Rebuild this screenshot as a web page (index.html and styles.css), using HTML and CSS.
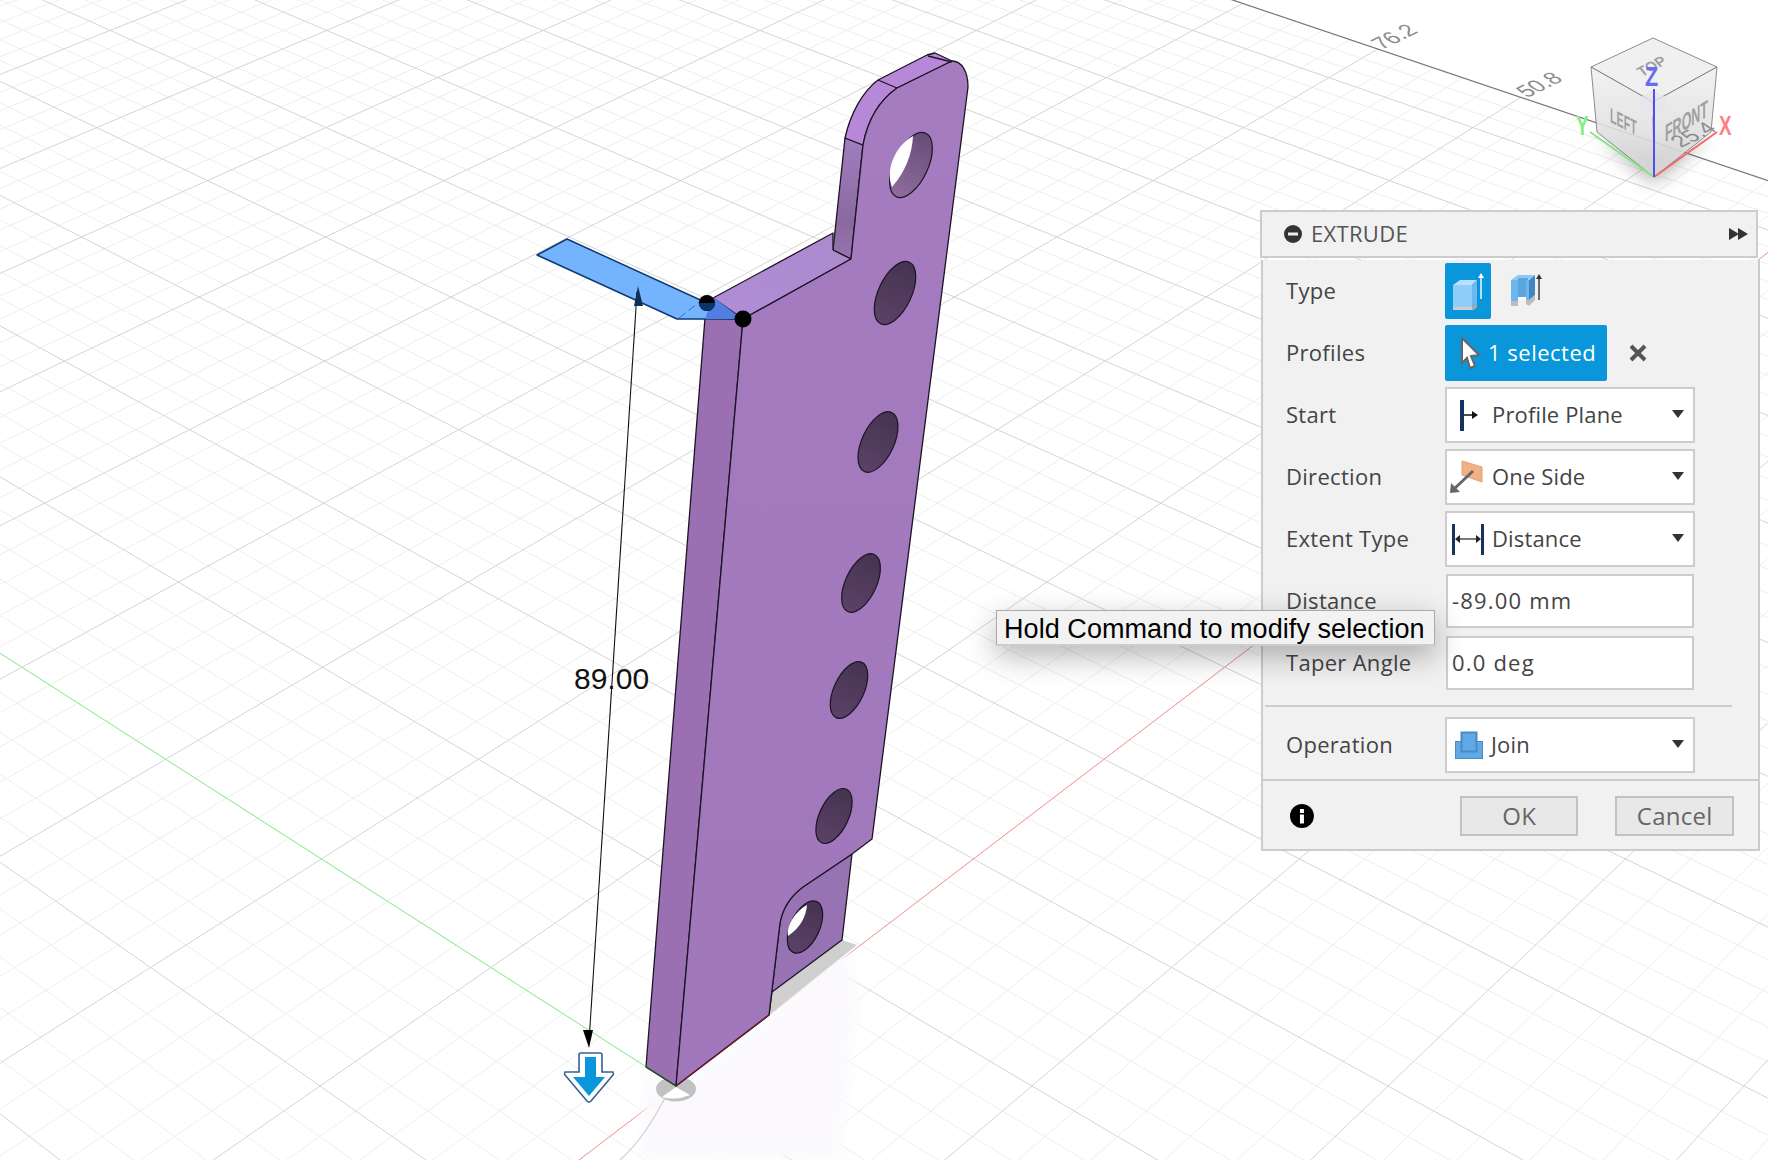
FILE: index.html
```html
<!DOCTYPE html>
<html lang="en">
<head>
    <meta charset="UTF-8">
    <title>Extrude</title>
    <link rel="stylesheet" href="styles.css">
</head>
<body>

<div class="viewport">
    <svg class="scene" width="1768" height="1160" viewBox="0 0 1768 1160">
        <defs>
            <filter id="blur6" x="-30%" y="-30%" width="160%" height="160%"><feGaussianBlur stdDeviation="6"/></filter>
            <filter id="blur10" x="-50%" y="-50%" width="200%" height="200%"><feGaussianBlur stdDeviation="10"/></filter>
            <linearGradient id="frontFace" x1="0" y1="0" x2="0" y2="1">
                <stop offset="0" stop-color="#a57cc0"/>
                <stop offset="1" stop-color="#a077ba"/>
            </linearGradient>
            <linearGradient id="innerFace" x1="0" y1="0" x2="0" y2="1">
                <stop offset="0" stop-color="#a07ec0"/>
                <stop offset="0.7" stop-color="#8a699f"/>
                <stop offset="1" stop-color="#9874b2"/>
            </linearGradient>
            <linearGradient id="ledgeFace" x1="0" y1="1" x2="1" y2="0">
                <stop offset="0" stop-color="#b08dd6"/>
                <stop offset="1" stop-color="#ab8acd"/>
            </linearGradient>
            <linearGradient id="holeFill" x1="0" y1="0" x2="0" y2="1">
                <stop offset="0" stop-color="#453350"/>
                <stop offset="1" stop-color="#5a4267"/>
            </linearGradient>
            <linearGradient id="rimFill" x1="0" y1="0" x2="0" y2="1">
                <stop offset="0" stop-color="#664d76"/>
                <stop offset="1" stop-color="#906c9c"/>
            </linearGradient>
            <linearGradient id="cubeSide" x1="0" y1="0" x2="0" y2="1">
                <stop offset="0" stop-color="#f0f0f0"/>
                <stop offset="1" stop-color="#d6d6d6"/>
            </linearGradient>
        </defs>

        <!-- ground grid, filled in by grid.js -->
        <g id="grid"></g>

        <!-- ground shadows -->
        <polygon class="reflection" points="646,1067 676,1086 769,1015 843,940 858,990 840,1160 640,1160" filter="url(#blur6)"/>
        <polygon class="ground-shadow" points="769,1015 772,992 842,940 857,945"/>
        <ellipse class="origin-ring" cx="676" cy="1089" rx="20" ry="12.5"/>
        <path class="origin-hole" d="M676 1087 L662 1097 Q676 1101 690 1095 Z"/>
        <path class="origin-curve" d="M665 1098 C652 1122 640 1142 620 1160"/>

        <!-- the part -->
        <g class="part">
            <path class="left-face" d="M705 318 L743 319 L676 1086 L646 1067 Z"/>
            <path class="low-face" d="M852 854 L842 940 L772 992 L769 1015 L780 923 C782 912 788 898 803 887 Z"/>
            <path class="inner-face" d="M845 138 L863 145 L851 259 L833 250 Z"/>
            <path class="ledge-face" d="M713 298 L833 233 L833 250 L851 259 L743 319 Z"/>
            <path class="top-face" d="M845 138 C850 115 862 92 878 80 L927 55 L935 53 L952 61 L897 88 C880 100 868 118 863 145 Z"/>
            <path class="front-face" d="M743 319 L851 259 L863 145 C868 118 880 100 897 88 L952 61 C962 61 968 72 968 87 L872 839 L852 854 L803 887 C788 898 782 912 780 923 L769 1015 L676 1086 Z"/>
            <path class="part-edge" d="M878 80 L897 88 M928 56 L952 62"/>
            <path class="red-edge" d="M676 1086 L769 1015"/>
            <path class="green-edge" d="M646 1067 L676 1086"/>
        </g>

        <!-- holes -->
        <g class="holes">
            <ellipse class="hole-rim" cx="911" cy="165" rx="17" ry="35" transform="rotate(25 911 165)"/>
            <path class="hole-through" d="M892 187 C885 170 895 146 913 136 C912 155 905 172 892 187 Z"/>
            <ellipse class="hole" cx="895" cy="293" rx="16.5" ry="34" transform="rotate(25 895 293)"/>
            <ellipse class="hole" cx="878" cy="442" rx="16" ry="32.5" transform="rotate(25 878 442)"/>
            <ellipse class="hole" cx="861" cy="583" rx="15.5" ry="31.5" transform="rotate(25 861 583)"/>
            <ellipse class="hole" cx="849" cy="690" rx="15" ry="30.5" transform="rotate(25 849 690)"/>
            <ellipse class="hole" cx="834" cy="816" rx="14.5" ry="29.5" transform="rotate(25 834 816)"/>
            <ellipse class="hole" cx="805" cy="927" rx="14.5" ry="28" transform="rotate(25 805 927)"/>
            <path class="hole-through" d="M788 936 C786 925 796 911 807 905 C806 917 800 928 788 936 Z"/>
        </g>

        <!-- selected profile -->
        <polygon class="flap" points="537,255 567,239 742,319 677,319"/>
        <polygon class="flap-overlap" points="713,297 742,319 705,319"/>
        <path class="flap-dash" d="M679 318 L702 300"/>
        <circle class="snap-dot" cx="707" cy="303" r="8"/>
        <path class="snap-dot-cover" d="M699 303 L715 303 A8 8 0 0 1 699 303 Z"/>
        <circle class="snap-dot" cx="743" cy="319" r="8.5"/>

        <!-- dimension -->
        <path class="dim-line" d="M637 292 L589 1042"/>
        <polygon class="dim-head-top" points="638,286 643,306 634,306"/>
        <polygon class="dim-head" points="589,1048 583,1030 593,1030"/>
        <text class="dim-text" x="574" y="689">89.00</text>

        <!-- drag arrow -->
        <path class="drag-outer" d="M581 1053 L600 1053 Q602 1053 602 1055 L602 1072 L613 1072 Q614 1074 613 1075 L591 1101 Q589 1103 587 1101 L565 1075 Q564 1074 565 1072 L579 1072 L579 1055 Q579 1053 581 1053 Z"/>
        <path class="drag-fill" d="M585 1057 L596 1057 L596 1077 L605 1077 L589 1096 L573 1077 L585 1077 Z"/>

        <!-- sheet labels -->
        <text class="sheet-label" transform="matrix(0.95 -0.46 0.93 0.66 1382 50)">76.2</text>
        <text class="sheet-label" transform="matrix(0.95 -0.46 0.93 0.66 1527 98)">50.8</text>

        <!-- view cube -->
        <polygon class="cube-shadow" points="1600,135 1654,182 1708,135 1654,150" filter="url(#blur10)"/>
        <g class="cube">
            <polygon class="cube-top" points="1653,38 1717,67 1653,102 1591,67"/>
            <polygon class="cube-side" points="1591,67 1653,102 1654,177 1597,132"/>
            <polygon class="cube-side" points="1653,102 1717,67 1711,132 1654,177"/>
        </g>
        <polygon class="cube-home" points="1653,90 1665,97 1665,110 1653,117 1641,110 1641,97"/>
        <text class="cube-label" transform="matrix(0.79 -0.42 0.58 0.72 1642 77)">TOP</text>
        <text class="cube-label" transform="matrix(0.67 0.34 0 1.3 1610 122)">LEFT</text>
        <text class="cube-label" transform="matrix(0.78 -0.47 0 1.5 1665 142)">FRONT</text>
        <text class="sheet-label" transform="matrix(0.95 -0.46 0.93 0.66 1681 148)">25.4</text>
        <path class="axis-y" d="M1590 132 L1654 177"/>
        <path class="axis-x" d="M1717 132 L1654 177"/>
        <path class="axis-z" d="M1654 89 L1654 177"/>
        <text class="axis-name name-z" transform="matrix(0.8 0 0 1 1645 86)">Z</text>
        <text class="axis-name name-y" transform="matrix(0.7 0 0 1 1576 135)">Y</text>
        <text class="axis-name name-x" transform="matrix(0.7 0 0 1 1719 135)">X</text>
    </svg>

    <section class="panel">
        <header class="panel-head">
            <svg class="head-icon" width="18" height="18" viewBox="0 0 18 18">
                <circle cx="9" cy="9" r="9" fill="#333"/>
                <rect x="4" y="7.5" width="10" height="3" fill="#eee"/>
            </svg>
            <span class="panel-title">EXTRUDE</span>
            <svg class="head-more" width="20" height="12" viewBox="0 0 20 12">
                <path d="M0 0 L10 6 L0 12 Z M9 0 L19 6 L9 12 Z" fill="#333"/>
            </svg>
        </header>

        <div class="panel-body">
            <div class="row">
                <div class="label">Type</div>
                <div class="type-btn active">
                    <svg width="34" height="36" viewBox="0 0 34 36">
                        <polygon points="8,11 15,6 32,6 27,11" fill="#b8e2ff"/>
                        <rect x="8" y="11" width="19" height="22" fill="#8fcdfb"/>
                        <polygon points="27,11 32,6 32,29 27,33" fill="#6bb8f2"/>
                        <rect x="8" y="33" width="19" height="5" fill="#cfcfcf"/>
                        <polygon points="27,33 32,29 32,33 27,38" fill="#aaa"/>
                    </svg>
                    <svg class="type-arrow" width="6" height="26" viewBox="0 0 6 26">
                        <path d="M3 26 L3 4" stroke="#fff" stroke-width="1.4"/>
                        <path d="M3 0 L6 5 L0 5 Z" fill="#fff"/>
                    </svg>
                </div>
                <div class="type-btn">
                    <svg width="32" height="36" viewBox="0 0 32 36">
                        <polygon points="0,6 7,1 24,1 17,6" fill="#8fc8f2"/>
                        <rect x="0" y="6" width="7" height="21" fill="#6fb6ec"/>
                        <rect x="7" y="4" width="10" height="19" fill="#5aa5dd"/>
                        <rect x="7" y="23" width="10" height="3" fill="#fff"/>
                        <rect x="15" y="6" width="3" height="20" fill="#6fb6ec"/>
                        <polygon points="18,6 24,1 24,21 18,26" fill="#3f88c5"/>
                        <polygon points="0,27 7,27 7,32 0,32" fill="#bdbdbd"/>
                        <polygon points="15,26 18,26 24,21 24,26 18,32 15,30" fill="#bdbdbd"/>
                        <path d="M28 26 L28 4" stroke="#333" stroke-width="1.4"/>
                        <path d="M28 0 L31 5 L25 5 Z" fill="#333"/>
                    </svg>
                </div>
            </div>

            <div class="row">
                <div class="label">Profiles</div>
                <div class="select-btn">
                    <svg width="22" height="32" viewBox="0 0 22 32">
                        <path d="M3 1 L20 18 L12 19 L16 29 L11 31 L8 21 L3 26 Z" fill="#fff" stroke="#666" stroke-width="2"/>
                    </svg>
                    <span>1 selected</span>
                </div>
                <svg class="clear-x" width="18" height="18" viewBox="0 0 18 18">
                    <path d="M2 2 L16 16 M16 2 L2 16" stroke="#555" stroke-width="4"/>
                </svg>
            </div>

            <div class="row">
                <div class="label">Start</div>
                <div class="dropdown">
                    <svg class="dd-icon" width="40" height="34" viewBox="0 0 40 34">
                        <rect x="13" y="2" width="4" height="31" fill="#14315f"/>
                        <path d="M17 17 L28 17" stroke="#111" stroke-width="1.5"/>
                        <path d="M25 13 L31 17 L25 21 Z" fill="#111"/>
                    </svg>
                    <span>Profile Plane</span>
                    <i class="caret"></i>
                </div>
            </div>

            <div class="row">
                <div class="label">Direction</div>
                <div class="dropdown">
                    <svg class="dd-icon" width="40" height="34" viewBox="0 0 40 34">
                        <polygon points="15,1 35,7 35,22 15,15" fill="#f2b184" stroke="#e0a07a"/>
                        <path d="M26 11 L7 29" stroke="#666" stroke-width="3"/>
                        <path d="M3 33 L4 23 L13 32 Z" fill="#666"/>
                    </svg>
                    <span>One Side</span>
                    <i class="caret"></i>
                </div>
            </div>

            <div class="row">
                <div class="label">Extent Type</div>
                <div class="dropdown">
                    <svg class="dd-icon" width="40" height="34" viewBox="0 0 40 34">
                        <rect x="5" y="2" width="3" height="31" fill="#14315f"/>
                        <rect x="34" y="2" width="3" height="31" fill="#14315f"/>
                        <path d="M11 17 L31 17" stroke="#222" stroke-width="1.2"/>
                        <path d="M8 17 L13 13 L13 21 Z M34 17 L29 13 L29 21 Z" fill="#222"/>
                    </svg>
                    <span>Distance</span>
                    <i class="caret"></i>
                </div>
            </div>

            <div class="row">
                <div class="label">Distance</div>
                <div class="field">-89.00 mm</div>
            </div>

            <div class="row">
                <div class="label">Taper Angle</div>
                <div class="field">0.0 deg</div>
            </div>

            <hr class="divider">

            <div class="row">
                <div class="label">Operation</div>
                <div class="dropdown">
                    <svg class="dd-icon join" width="38" height="34" viewBox="0 0 38 34">
                        <rect x="7.5" y="13.5" width="27" height="17" fill="#5fa9e6" stroke="#4a8cc0"/>
                        <rect x="13.5" y="4.5" width="15" height="19" fill="#5fa9e6" stroke="#4a8cc0" stroke-width="2"/>
                    </svg>
                    <span>Join</span>
                    <i class="caret"></i>
                </div>
            </div>
        </div>

        <footer class="panel-foot">
            <svg class="info" width="24" height="24" viewBox="0 0 24 24">
                <circle cx="12" cy="12" r="12" fill="#000"/>
                <rect x="10" y="5" width="4" height="4" fill="#fff"/>
                <rect x="10" y="10.5" width="4" height="9" fill="#fff"/>
            </svg>
            <div class="foot-btn ok">OK</div>
            <div class="foot-btn">Cancel</div>
        </footer>
    </section>

    <div class="tooltip">Hold Command to modify selection</div>
</div>

<script src="grid.js"></script>
</body>
</html>
```

FILE: styles.css
```css
body {
    margin: 0;
    background: #fff;
    font-family: "Open Sans", "Liberation Sans", sans-serif;
    color: #444;
}

.viewport {
    position: relative;
    width: 1768px;
    height: 1160px;
    overflow: hidden;
}

.scene {
    display: block;
}

/* grid */
.grid-minor { stroke: #eeeeee; stroke-width: 1; }
.grid-major { stroke: #d4d4d4; stroke-width: 1; }
.grid-edge { stroke: #777; stroke-width: 1.2; }
.grid-red { stroke: #ff9898; stroke-width: 1; }
.grid-green { stroke: #8ef58e; stroke-width: 1; }

/* ground */
.reflection { fill: #fbf9fd; }
.ground-shadow { fill: #cfcfcf; }
.origin-ring { fill: #c2c2c2; }
.origin-hole { fill: #fff; }
.origin-curve { fill: none; stroke: #cfcfcf; stroke-width: 1.2; }

/* part */
.part path { stroke: #1d1423; stroke-width: 1.3; stroke-linejoin: round; }
.front-face { fill: url(#frontFace); }
.left-face { fill: #9a70b2; }
.low-face { fill: #9873b3; }
.inner-face { fill: url(#innerFace); }
.ledge-face { fill: url(#ledgeFace); }
.top-face { fill: #b888d8; }
.part .part-edge { fill: none; }
.part .red-edge { stroke: #6d1a2c; }
.part .green-edge { stroke: #1c5a24; }

.hole { fill: url(#holeFill); stroke: #1d1423; stroke-width: 1.2; }
.hole-rim { fill: url(#rimFill); stroke: #1d1423; stroke-width: 1.2; }
.hole-through { fill: #fff; }

/* profile */
.flap { fill: #74b4ff; stroke: #0f3a70; stroke-width: 1.5; stroke-linejoin: round; }
.flap-overlap { fill: #527de2; }
.flap-dash { stroke: #3a6ab0; stroke-width: 1; stroke-dasharray: 8 4; }
.snap-dot { fill: #000; }
.snap-dot-cover { fill: #0c3468; }

/* dimension */
.dim-line { stroke: #111; stroke-width: 1.1; }
.dim-head { fill: #000; }
.dim-head-top { fill: #0d2f58; }
.dim-text {
    font-family: "Liberation Sans", Arial, sans-serif;
    font-size: 30px;
    fill: #111;
}

.drag-outer { fill: #fff; stroke: #34618f; stroke-width: 1.6; }
.drag-fill { fill: #0a96da; }

/* labels */
.sheet-label {
    font-family: "Liberation Sans", Arial, sans-serif;
    font-size: 20px;
    fill: #8c8c8c;
}

/* cube */
.cube-shadow { fill: #000; opacity: 0.35; }
.cube polygon { stroke: #7c7c7c; stroke-width: 1; opacity: 0.88; }
.cube-top { fill: #efefef; }
.cube-side { fill: url(#cubeSide); }
.cube-home { fill: #e5e5ec; opacity: 0.8; }
.cube-label {
    font-family: "Liberation Sans", Arial, sans-serif;
    font-size: 16px;
    font-weight: bold;
    fill: #a0a0a0;
}
.axis-x { stroke: #f26a6a; stroke-width: 2; }
.axis-y { stroke: #84e884; stroke-width: 2; }
.axis-z { stroke: #5050ee; stroke-width: 2; }
.axis-name {
    font-family: "Liberation Sans", Arial, sans-serif;
    font-size: 27px;
    font-weight: bold;
}
.name-x { fill: #ff8080; }
.name-y { fill: #84f084; }
.name-z { fill: #6a6af2; }

/* extrude panel */
.panel {
    position: absolute;
    left: 1260px;
    top: 210px;
    width: 500px;
    font-size: 22px;
    letter-spacing: 0.3px;
}

.panel-head {
    display: flex;
    align-items: center;
    box-sizing: border-box;
    height: 48px;
    margin-right: 2px;
    padding: 0 7px 0 22px;
    background: #f1f1f1;
    border: 2px solid #ccc;
}

.head-icon {
    margin-right: 9px;
}

.panel-title {
    flex: 1;
    color: #555;
    margin-top: -2px;
}

.panel-body {
    display: flex;
    flex-direction: column;
    gap: 6px;
    margin: 2px 0 0 1px;
    padding: 3px 0 6px;
    background: #f1f1f1;
    border: solid #ccc;
    border-width: 0 2px;
}

.row {
    display: flex;
    align-items: center;
    height: 56px;
}

.label {
    width: 159px;
    margin: -2px 0 0 23px;
    white-space: nowrap;
}

.type-btn {
    display: flex;
    align-items: center;
    box-sizing: border-box;
    width: 46px;
    height: 56px;
    margin-right: 20px;
    padding-top: 2px;
    border-radius: 2px;
}

.type-btn.active {
    background: #0996da;
}

.type-btn svg {
    flex: none;
}

.type-btn.active .type-arrow {
    margin-left: -1px;
    margin-top: -12px;
}

.select-btn {
    display: flex;
    align-items: center;
    gap: 7px;
    box-sizing: border-box;
    width: 162px;
    height: 56px;
    padding-left: 14px;
    background: #0996da;
    border-radius: 2px;
    color: #fff;
    letter-spacing: 0.5px;
}

.select-btn span {
    margin-top: -2px;
}

.clear-x {
    margin-left: 22px;
}

.dropdown {
    position: relative;
    display: flex;
    align-items: center;
    box-sizing: border-box;
    width: 250px;
    height: 56px;
    background: #fff;
    border: 2px solid #ccc;
    letter-spacing: 0.15px;
}

.dropdown span {
    margin-top: -2px;
}

.dd-icon {
    flex: none;
    width: 40px;
    margin: 0 5px 0 0;
}

.dd-icon.join {
    margin-right: 4px;
}

.caret {
    position: absolute;
    right: 9px;
    top: 21px;
    border: solid transparent;
    border-width: 8px 6px 0;
    border-top-color: #333;
}

.field {
    display: flex;
    align-items: center;
    box-sizing: border-box;
    width: 248px;
    height: 54px;
    margin-left: 1px;
    padding: 0 0 2px 4px;
    background: #fff;
    border: 2px solid #ccc;
    letter-spacing: 1.2px;
}

.divider {
    width: 467px;
    height: 2px;
    margin: 8px 0 4px 2px;
    border: 0;
    background: #ccc;
}

.panel-foot {
    display: flex;
    align-items: center;
    box-sizing: border-box;
    height: 72px;
    margin-left: 1px;
    padding: 2px 24px 0 27px;
    background: #f1f1f1;
    border: 2px solid #ccc;
}

.info {
    margin-right: 146px;
}

.foot-btn {
    box-sizing: border-box;
    width: 119px;
    height: 40px;
    background: #e8e8e8;
    border: 2px solid #c2c2c2;
    color: #666;
    font-size: 24px;
    line-height: 36px;
    text-align: center;
}

.foot-btn.ok {
    margin-right: 37px;
}

.tooltip {
    position: absolute;
    left: 996px;
    top: 610px;
    box-sizing: border-box;
    width: 439px;
    height: 36px;
    padding-left: 7px;
    background: #f2f2f2;
    border: 1px solid #aaa;
    border-bottom: 2px solid #ccc;
    box-shadow: 0 10px 30px rgba(0, 0, 0, 0.3);
    font-family: "Liberation Sans", Arial, sans-serif;
    font-size: 27px;
    letter-spacing: 0.06px;
    line-height: 37px;
    color: #000;
    white-space: nowrap;
}
```

FILE: grid.js
```js
// ground plane lines: u runs along the red axis, v along the green one,
// one unit is one heavy grid square (25.4 mm), five light squares each
const gridGroup = document.getElementById('grid');
const uEnd = 10.6;

function project(u, v) {
    const k = u + v;
    const w = 0.046 * k + 1;
    return [(15.5 * k + 178 * (u - v) + 676) / w, (-74 * k + 1086) / w];
}

function addLine(a, b, cls) {
    const p = project(a[0], a[1]);
    const q = project(b[0], b[1]);
    const line = document.createElementNS('http://www.w3.org/2000/svg', 'line');
    line.setAttribute('x1', p[0].toFixed(1));
    line.setAttribute('y1', p[1].toFixed(1));
    line.setAttribute('x2', q[0].toFixed(1));
    line.setAttribute('y2', q[1].toFixed(1));
    line.setAttribute('class', cls);
    gridGroup.appendChild(line);
}

// light lines go first so the heavy ones sit on top
for (const heavy of [false, true]) {
    for (let i = -30; i <= 53; i++) {
        if ((i % 5 === 0) === heavy) {
            addLine([i / 5, -8], [i / 5, 14], heavy ? 'grid-major' : 'grid-minor');
        }
    }
    for (let i = -40; i <= 70; i++) {
        if ((i % 5 === 0) === heavy) {
            addLine([-6, i / 5], [uEnd, i / 5], heavy ? 'grid-major' : 'grid-minor');
        }
    }
}

addLine([uEnd, -8], [uEnd, 14], 'grid-edge');
addLine([-6, 0], [uEnd, 0], 'grid-red');
addLine([0, -8], [0, 14], 'grid-green');
```
